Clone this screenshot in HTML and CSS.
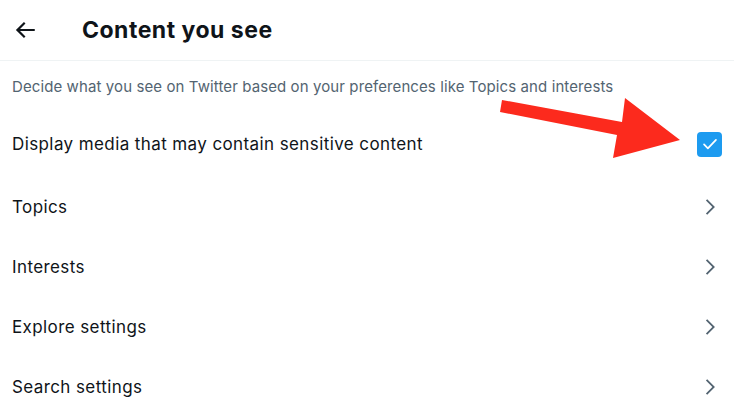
FILE: index.html
```html
<!DOCTYPE html>
<html>
<head>
<meta charset="utf-8">
<link rel="stylesheet" href="styles.css">
</head>
<body>
<div class="page">
  <header class="header">
    <svg class="back" viewBox="0 0 24 24" width="26" height="26"><path d="M7.414 13l5.043 5.04-1.414 1.42L3.586 12l7.457-7.46 1.414 1.42L7.414 11H21v2H7.414z"/></svg>
    <h1 class="title">Content you see</h1>
  </header>
  <p class="desc">Decide what you see on Twitter based on your preferences like Topics and interests</p>
  <div class="row row-check">
    <span class="label">Display media that may contain sensitive content</span>
    <span class="checkbox"><svg viewBox="0 0 24 24" width="22" height="22"><path d="M5.5 12.5l4.2 4.2L18.5 7.5" fill="none" stroke="#fff" stroke-width="1.9" stroke-linecap="round" stroke-linejoin="round"/></svg></span>
  </div>
  <div class="row"><span class="label">Topics</span><svg class="chev" viewBox="0 0 24 24" width="22" height="22"><path d="M14.586 12L7.543 4.96l1.414-1.42L17.414 12l-8.457 8.46-1.414-1.42L14.586 12z"/></svg></div>
  <div class="row"><span class="label">Interests</span><svg class="chev" viewBox="0 0 24 24" width="22" height="22"><path d="M14.586 12L7.543 4.96l1.414-1.42L17.414 12l-8.457 8.46-1.414-1.42L14.586 12z"/></svg></div>
  <div class="row"><span class="label">Explore settings</span><svg class="chev" viewBox="0 0 24 24" width="22" height="22"><path d="M14.586 12L7.543 4.96l1.414-1.42L17.414 12l-8.457 8.46-1.414-1.42L14.586 12z"/></svg></div>
  <div class="row"><span class="label">Search settings</span><svg class="chev" viewBox="0 0 24 24" width="22" height="22"><path d="M14.586 12L7.543 4.96l1.414-1.42L17.414 12l-8.457 8.46-1.414-1.42L14.586 12z"/></svg></div>
  <svg class="annot" viewBox="0 0 734 413" width="734" height="413"><polygon points="502,100 622,122 625,98 680,140 613,158 617,135 500,112" fill="#fc2a1d"/></svg>
</div>
</body>
</html>
```
FILE: styles.css
```css
* { box-sizing: border-box; }
html, body { margin: 0; padding: 0; background: #fff; }
body { font-family: Inter, "Noto Sans", sans-serif; color: #0f1419; }
.page { position: relative; width: 734px; height: 413px; overflow: hidden; }
.header { display: flex; align-items: center; height: 61px; border-bottom: 1px solid #eff3f4; padding-left: 12px; }
.back { fill: #0f1419; flex: none; }
.title { margin: 0 0 0 44px; font-size: 23px; font-weight: 700; line-height: 28px; letter-spacing: 0.5px; }
.desc { margin: 0; padding: 16px 12px 14px; font-size: 15px; line-height: 20px; letter-spacing: 0.1px; color: #536471; }
.row { display: flex; align-items: center; justify-content: space-between; height: 60px; padding: 1px 13px 0 12px; }
.row-check { height: 65px; padding-right: 12px; }
.label { font-size: 17px; line-height: 22px; letter-spacing: 0.4px; }
.checkbox { width: 25px; height: 25px; border-radius: 4px; background: #1d9bf0; display: flex; align-items: center; justify-content: center; }
.chev { fill: #536471; }
.annot { position: absolute; left: 0; top: 0; pointer-events: none; }
```
